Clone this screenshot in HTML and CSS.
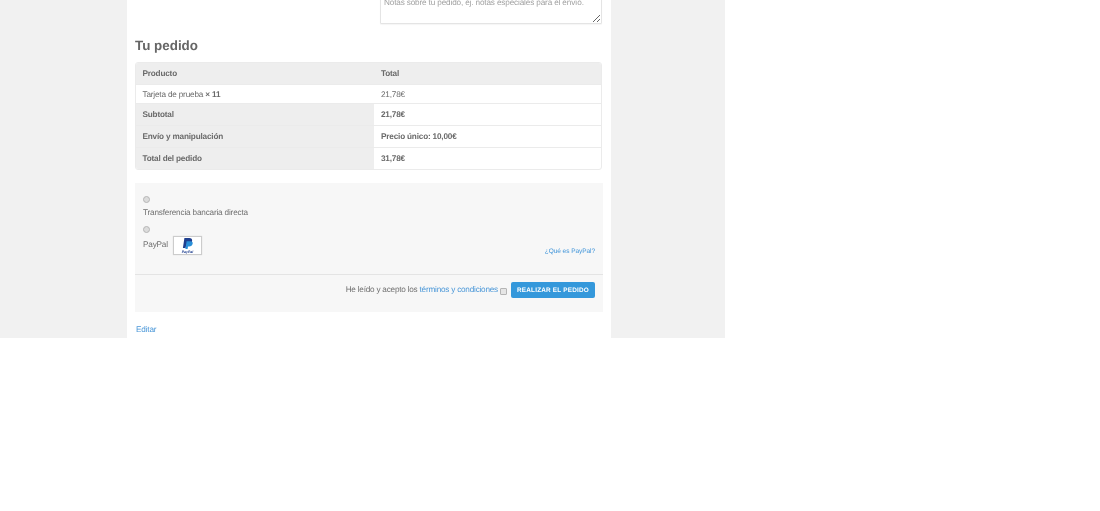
FILE: index.html
```html
<!DOCTYPE html>
<html lang="es">
<head>
<meta charset="utf-8">
<title>Tu pedido</title>
<link rel="stylesheet" href="styles.css">
</head>
<body>
<div class="frame">
  <main class="page">
    <div class="notes-row">
      <textarea class="notes" placeholder="Notas sobre tu pedido, ej. notas especiales para el envío."></textarea>
    </div>
    <h3 class="title">Tu pedido</h3>
    <table class="order">
      <thead>
        <tr class="head"><th class="c1">Producto</th><th class="c2">Total</th></tr>
      </thead>
      <tbody>
        <tr class="item"><td class="c1">Tarjeta de prueba <strong>× 11</strong></td><td class="c2">21,78€</td></tr>
      </tbody>
      <tfoot>
        <tr><th class="c1">Subtotal</th><td class="c2 strong">21,78€</td></tr>
        <tr><th class="c1">Envío y manipulación</th><td class="c2 strong">Precio único: 10,00€</td></tr>
        <tr class="last"><th class="c1">Total del pedido</th><td class="c2 strong">31,78€</td></tr>
      </tfoot>
    </table>
    <section class="payment">
      <div class="methods">
        <div class="method">
          <span class="radio"></span>
          <label class="method-label">Transferencia bancaria directa</label>
        </div>
        <div class="method method-paypal">
          <span class="radio"></span>
          <div class="paypal-line">
            <label class="method-label">PayPal</label>
            <span class="pp-badge">
              <svg width="27" height="17" viewBox="0 0 27 17" aria-hidden="true">
                <path d="M10.400 1h4.800c2.200 0 3.200 1.100 2.900 3-.4 2.400-2.100 3.700-4.400 3.700h-1.400l-.7 3.300h-2.700z" fill="#1f3f8f"/>
                <path d="M12.600 4.200h3.900c1.600 0 2.500.9 2.200 2.400-.3 1.900-1.700 3-3.600 3h-1.100l-.4 2.400h-2.200z" fill="#2a8fd8"/>
                <text x="13.500" y="15.800" class="pp-word">PayPal</text>
              </svg>
            </span>
          </div>
          <a class="what" href="#">¿Qué es PayPal?</a>
        </div>
      </div>
      <div class="place">
        <span class="terms">He leído y acepto los <a href="#">términos y condiciones</a></span>
        <span class="check"></span>
        <button class="submit" type="button">REALIZAR EL PEDIDO</button>
      </div>
    </section>
    <a class="edit" href="#">Editar</a>
  </main>
</div>
</body>
</html>
```
FILE: styles.css
```css
* { box-sizing: border-box; }
html, body { margin: 0; padding: 0; background: #fff; }
body { font-family: "Liberation Sans", Arial, sans-serif; font-size: 8.200px; letter-spacing: -.18px; color: #707070; text-rendering: geometricPrecision; }
.frame { width: 725px; height: 338px; background: #f1f1f1; overflow: hidden; padding-left: 127px; }
.page { width: 484px; height: 338px; background: #fff; padding: 0 8px 0 8px; overflow: hidden; filter: blur(.4px); }
.notes-row { display: flex; justify-content: flex-end; height: 24px; padding-right: 1px; }
.notes { display: block; width: 222px; height: 40px; margin-top: -16px; padding: 13px 3px 0; border: 1px solid #e4e4e4; border-radius: 1px; font: 8.200px "Liberation Sans", Arial, sans-serif; letter-spacing: -.15px; text-rendering: geometricPrecision; color: #707070; background: #fff; resize: both; box-shadow: 0 1px 1px rgba(0,0,0,.04); }
.notes::placeholder { color: #a0a0a0; opacity: 1; }
.title { margin: 13px 0 8px; font-size: 13.400px; line-height: 17px; letter-spacing: 0; font-weight: 700; color: #666; }
.order { width: 467px; border-collapse: separate; border-spacing: 0; border: 1px solid #ebebeb; border-radius: 3px; table-layout: fixed; overflow: hidden; }
.order th, .order td { padding: 0 6.500px; text-align: left; font-size: 8.200px; color: #6a6a6a; height: 22px; border-top: 1px solid #ebebeb; }
.order th { font-weight: 700; background: #eee; }
.order .head th { border-top: 0; height: 21px; }
.order .item td { height: 19px; background: #fff; }
.order .c1 { width: 238px; }
.order .c2 { padding-left: 7px; }
.order .strong { font-weight: 700; }
.order strong { font-weight: 700; }
.payment { width: 468px; margin-top: 13px; background: #f7f7f7; height: 129px; display: flex; flex-direction: column; }
.methods { height: 92px; padding: 13px 8px 0; border-bottom: 1px solid #e4e4e4; }
.method { display: flex; flex-direction: column; align-items: flex-start; }
.method-paypal { position: relative; margin-top: 7px; }
.radio { width: 7px; height: 7px; margin: 0 0 4px 0; border-radius: 50%; background: #dcdcdc; border: 1px solid #b5b5b5; }
.method-label { font-size: 8.200px; line-height: 12px; color: #707070; }
.method-paypal .radio { margin-bottom: 3px; }
.paypal-line { display: flex; align-items: center; gap: 5px; }
.paypal-line .method-label { margin-top: -1px; }
.pp-badge { display: block; width: 29px; height: 19px; background: #fff; border: 1px solid #ccc; box-shadow: 0 0 1px rgba(0,0,0,.15); }
.pp-badge svg { display: block; }
.pp-word { font: italic 700 3.500px "Liberation Sans", Arial, sans-serif; letter-spacing: 0; fill: #1f3f8f; text-anchor: middle; }
.what { position: absolute; right: 0; top: 21px; font-size: 6.500px; letter-spacing: -.05px; line-height: 9px; color: #3f94d9; text-decoration: none; }
.place { flex: 1; display: flex; align-items: center; justify-content: flex-end; padding: 0 8px 7px; }
.terms { font-size: 8.200px; letter-spacing: -.22px; color: #707070; margin-top: -1px; }
.terms a, .edit { color: #4a97d8; text-decoration: none; }
.check { width: 7px; height: 7px; margin: 2px 4px 0 2px; background: #e6e6e6; border: 1px solid #b5b5b5; border-radius: 1px; }
.submit { width: 84px; height: 16px; padding: 0; border: 0; border-radius: 2px; background: #3498db; color: #fff; font: 700 6.400px "Liberation Sans", Arial, sans-serif; text-rendering: geometricPrecision; letter-spacing: .2px; }
.edit { display: block; margin-top: 12px; margin-left: 1px; font-size: 8.200px; line-height: 12px; }
```
